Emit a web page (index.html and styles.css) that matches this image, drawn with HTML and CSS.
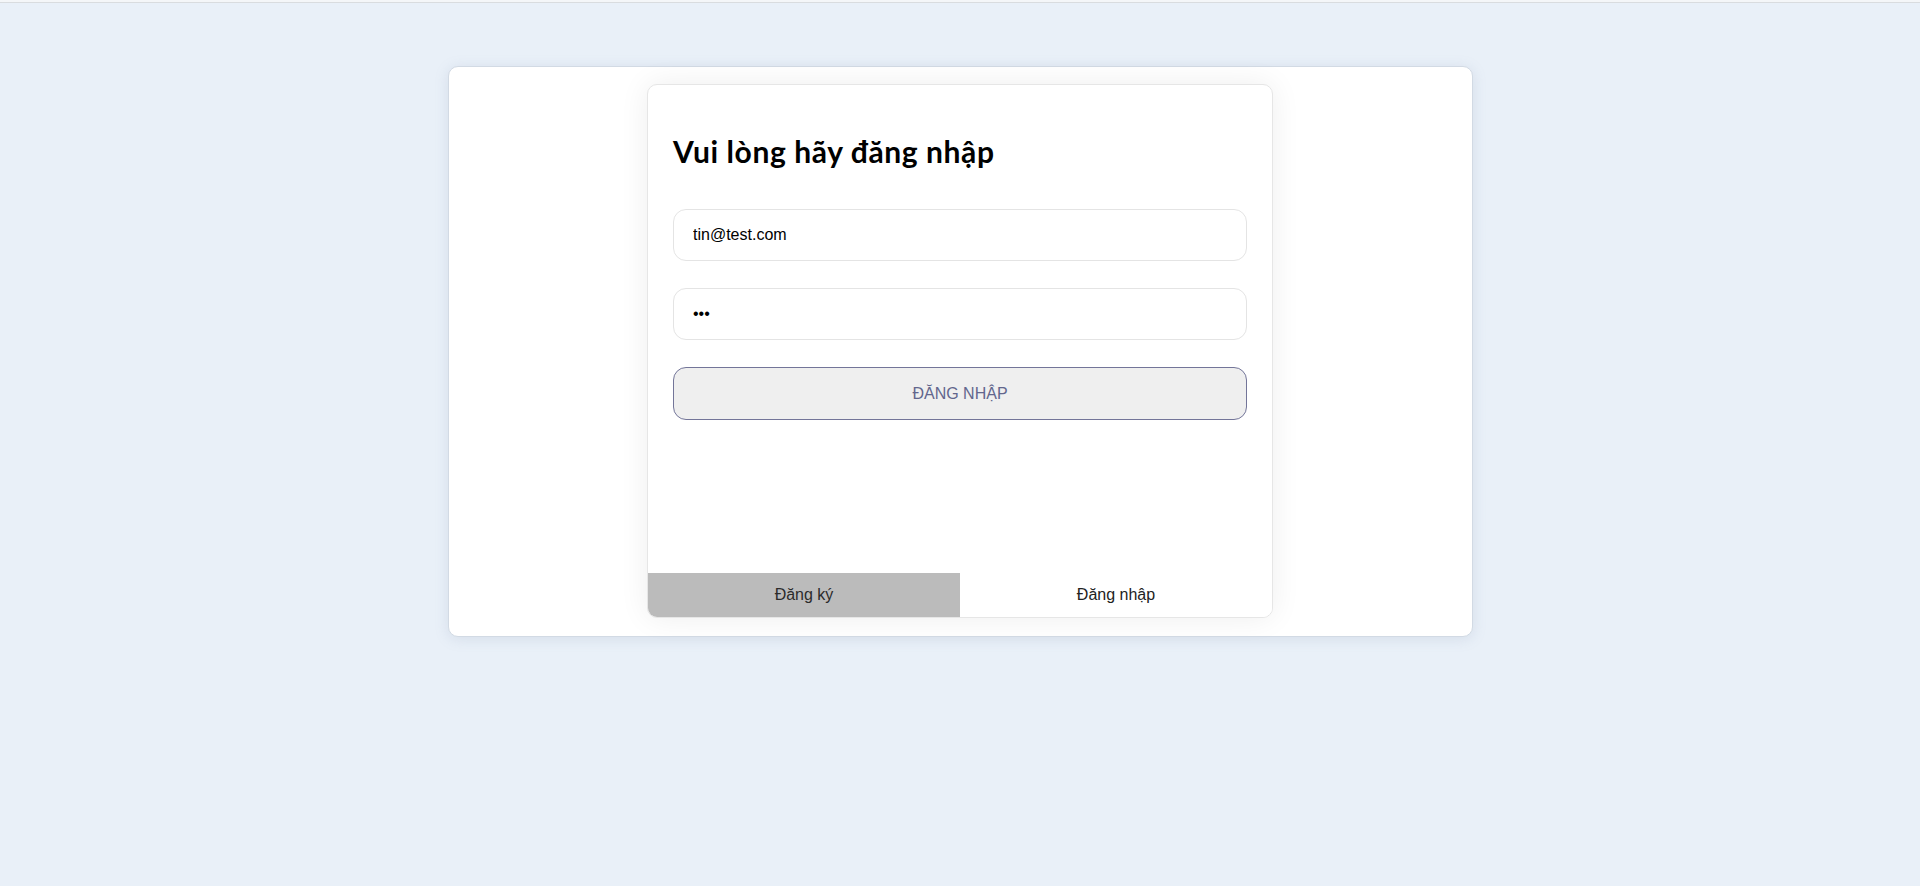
FILE: index.html
```html
<!DOCTYPE html>
<html lang="vi">
<head>
<meta charset="utf-8">
<title>Đăng nhập</title>
<link rel="stylesheet" href="styles.css">
</head>
<body>
<div class="topbar"></div>
<main class="page">
  <section class="outer-card">
    <div class="login-card">
      <form class="login-form">
        <h1 class="title">Vui lòng hãy đăng nhập</h1>
        <input class="field" type="email" value="tin@test.com">
        <input class="field" type="password" value="abc">
        <button class="submit" type="button">Đăng nhập</button>
      </form>
      <div class="tabs">
        <div class="tab tab-inactive">Đăng ký</div>
        <div class="tab tab-active">Đăng nhập</div>
      </div>
    </div>
  </section>
</main>
</body>
</html>
```
FILE: styles.css
```css
html, body {
  margin: 0;
  padding: 0;
}
body {
  background: #e9f0f8;
  font-family: "Liberation Sans", Arial, sans-serif;
  min-height: 886px;
}
.topbar {
  height: 2px;
  background: #f4f6f8;
  border-bottom: 1px solid #d9dcdf;
}
.page {
  display: flex;
  justify-content: center;
  padding-top: 63px;
}
.outer-card {
  width: 1023px;
  background: #fff;
  border: 1px solid #d2dae4;
  border-radius: 10px;
  box-shadow: 0 2px 14px rgba(120, 140, 170, 0.18);
  padding: 17px 0 18px;
  display: flex;
  justify-content: center;
}
.login-card {
  width: 624px;
  height: 532px;
  border: 1px solid #e6e6e6;
  border-radius: 10px;
  box-shadow: 0 0 30px rgba(0, 0, 0, 0.07);
  display: flex;
  flex-direction: column;
  overflow: hidden;
  background: #fff;
}
.login-form {
  flex: 1;
  display: flex;
  flex-direction: column;
  padding: 25px 25px 0;
}
.title {
  font-family: Lato, "Open Sans", sans-serif;
  font-weight: 700;
  font-size: 30px;
  letter-spacing: 0.6px;
  line-height: 34px;
  color: #000;
  margin: 24px 0 41px;
}
.field {
  height: 52px;
  box-sizing: border-box;
  border: 1px solid #e4e4e4;
  border-radius: 13px;
  padding: 0 19px;
  font-family: "Liberation Sans", Arial, sans-serif;
  font-size: 16px;
  color: #000;
  margin: 0 0 27px;
  outline: none;
  background: #fff;
}
.submit {
  height: 53px;
  box-sizing: border-box;
  border: 1px solid #737599;
  border-radius: 13px;
  background: #efefef;
  color: #62668d;
  font-family: "Liberation Sans", Arial, sans-serif;
  font-size: 16px;
  text-transform: uppercase;
  margin-top: 0;
}
.tabs {
  display: flex;
  height: 44px;
}
.tab {
  flex: 1;
  display: flex;
  align-items: center;
  justify-content: center;
  font-size: 16px;
  color: #222;
}
.tab-inactive {
  background: #bbbbbb;
  color: #2b2b2b;
}
.tab-active {
  background: #fff;
}
```
